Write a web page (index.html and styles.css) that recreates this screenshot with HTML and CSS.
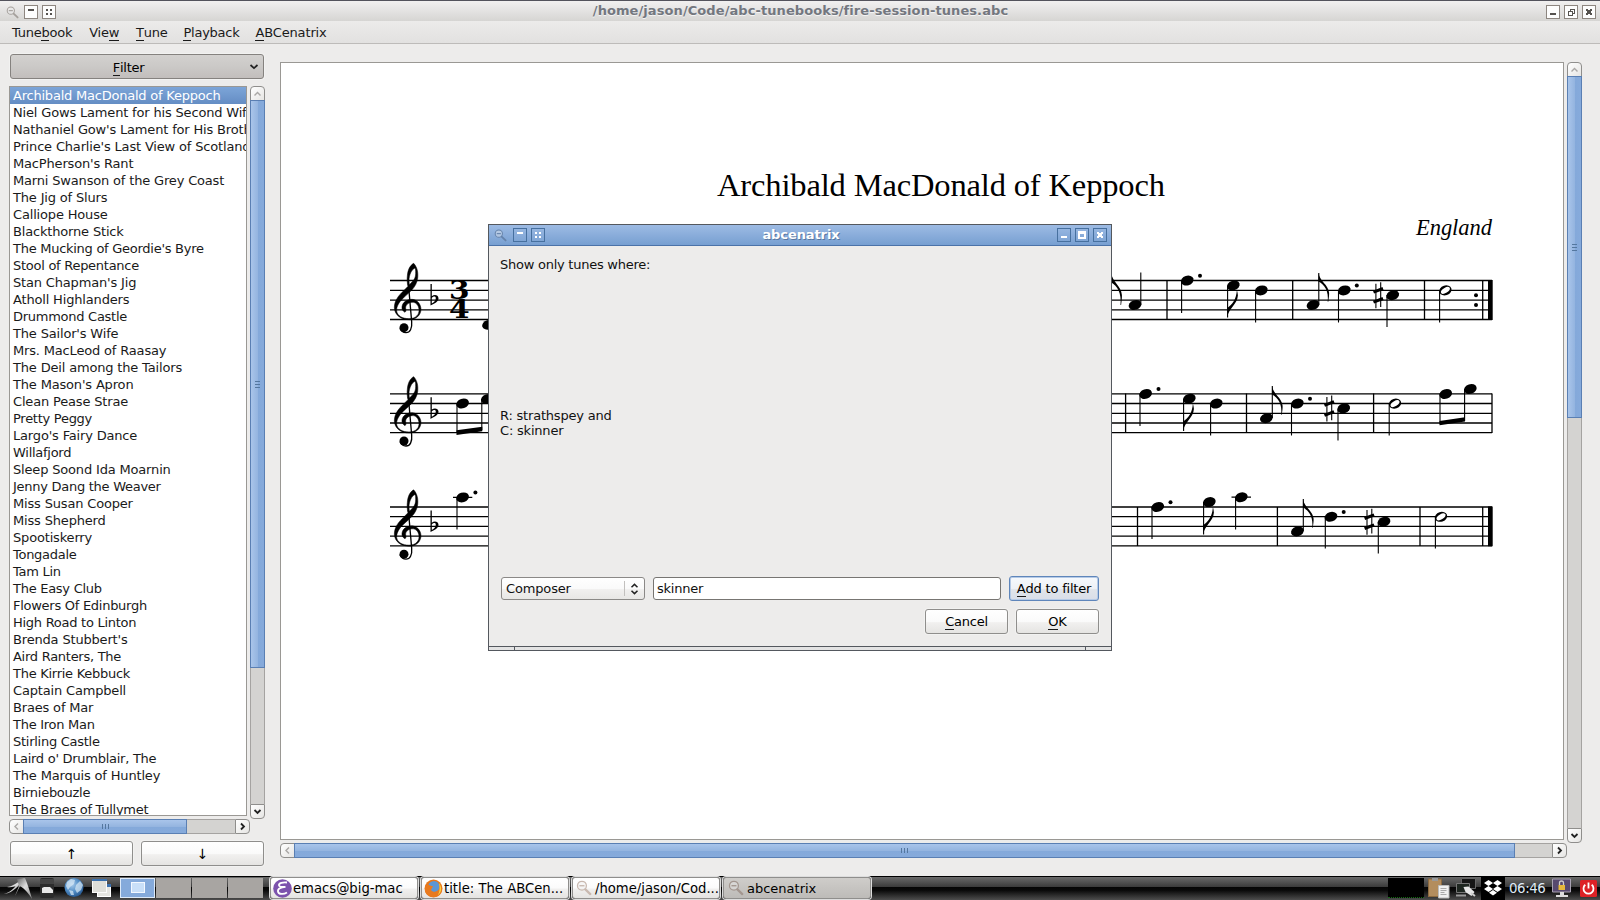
FILE: index.html
```html
<!DOCTYPE html>
<html lang="en">
<head>
<meta charset="utf-8">
<title>ABCenatrix</title>
<link rel="stylesheet" href="styles.css">
</head>
<body>
<svg class="defs" width="0" height="0">
  <defs>
    <linearGradient id="silver" x1="0" y1="0" x2="1" y2="1"><stop offset="0" stop-color="#555"/><stop offset=".5" stop-color="#ddd"/><stop offset="1" stop-color="#888"/></linearGradient>
    <radialGradient id="globe" cx=".4" cy=".35" r=".65"><stop offset="0" stop-color="#a5c9ea"/><stop offset=".6" stop-color="#4f8bc4"/><stop offset="1" stop-color="#2a5c94"/></radialGradient>
    <symbol id="lens" viewBox="0 0 14 14"><circle cx="5.2" cy="5" r="3.9" fill="#eee" fill-opacity=".4" stroke="currentColor" stroke-width="1.1"/><path d="M3 5h4.4" stroke="currentColor" stroke-width="1.2"/><path d="M8.2 8.2l4.3 4.1" stroke="currentColor" stroke-width="2" stroke-linecap="round"/></symbol>
    <g id="clef" transform="translate(370 240) scale(.33333)">
      <path fill-rule="evenodd" stroke="#000" stroke-width="1.5" d="M131 70C142 82 145 98 143 115C139 143 118 157 101 173C87 186 79 200 80 213C82 228 98 236 117 236C138 236 148 223 147 209C146 194 136 186 126 187C113 188 106 197 107 205C107 210 110 212 105 217C98 213 95 207 96 200C98 187 110 178 126 178C142 179 152 192 153 207C153 226 138 239 118 239C92 239 74 225 73 203C73 182 86 166 101 152L114 139C111 128 111 116 112 108C113 90 120 76 131 70ZM135 84C125 88 117 105 117 122L118 134C130 124 137 115 137 100C137 92 137 87 135 84Z"/>
      <path d="M115 130L125 245C127 266 120 278 108 278C100 278 93 273 90 265" fill="none" stroke="#000" stroke-width="4"/>
      <circle cx="102" cy="263" r="13.5"/>
    </g>
    <path id="flat" d="M430.5 284h1.3v12.2C434 294.4 438.3 294.6 438.5 298.3C438.6 301.6 434.5 303.8 430.5 305.6ZM431.8 298v5.4C434 302.3 436 300.5 435.8 298C435.5 295.8 433 296.5 431.8 298Z"/>
    <ellipse id="n" rx="6.5" ry="4.8" transform="rotate(-18)"/>
    <g id="h"><ellipse rx="6.3" ry="4.9" transform="rotate(-18)"/><ellipse rx="5" ry="2.5" transform="rotate(-32)" fill="#fff"/></g>
    <g id="sh" fill="none" stroke="#000"><path d="M-2.4-11.6V13M2.4-13V11.8" stroke-width="1.1"/><path d="M-4.8-3.2L4.7-6.8M-4.8 6.8L4.7 3.2" stroke-width="3"/></g>
    <path id="fu" d="M0 0C1 9 10 13 10.6 22C10.7 25 10.4 27 9.8 32H9.2C10.5 20 6 13 0 9.5Z"/>
    <path id="fd" d="M0 0C1-9 10-13 10.6-22C10.5-24 10-26 9.6-27.5C9-18 5-13 0-9.5Z"/>
  </defs>
</svg>

<header class="titlebar">
  <svg class="t-lens" width="13" height="13"><use href="#lens"/></svg>
  <span class="wb"><svg viewBox="0 0 12 12"><path d="M3 3h6v2H3z"/></svg></span>
  <span class="wb"><svg viewBox="0 0 12 12"><path d="M3 3h2v2H3zM7 3h2v2H7zM3 7h2v2H3zM7 7h2v2H7z"/></svg></span>
  <span class="t-text main-title">/home/jason/Code/abc-tunebooks/fire-session-tunes.abc</span>
  <span class="wb"><svg viewBox="0 0 12 12"><path d="M3 7h6v2H3z"/></svg></span>
  <span class="wb"><svg viewBox="0 0 12 12"><path fill-rule="evenodd" d="M5 3h5v5H8v2H3V5h2zM6 4v1h2v2h1V4zM4 6v3h3V6z"/></svg></span>
  <span class="wb"><svg viewBox="0 0 12 12"><path d="M3 3h2v1h2V3h2v2H8v2h1v2H7V8H5v1H3V7h1V5H3z"/></svg></span>
</header>
<nav class="menubar">
  <span>Tune<u>b</u>ook</span><span>Vie<u>w</u></span><span><u>T</u>une</span><span><u>P</u>layback</span><span><u>A</u>BCenatrix</span>
</nav>

<main class="content">
  <aside class="side">
    <button class="btn filter"><span><u>F</u>ilter</span><svg width="10" height="6"><path d="M1.5 1L5 4.2L8.5 1" fill="none" stroke="#222" stroke-width="1.7"/></svg></button>
    <div class="listwrap">
      <ul class="list">
        <li class="sel">Archibald MacDonald of Keppoch</li><li>Niel Gows Lament for his Second Wife</li><li>Nathaniel Gow's Lament for His Brother</li><li>Prince Charlie's Last View of Scotland</li><li>MacPherson's Rant</li><li>Marni Swanson of the Grey Coast</li><li>The Jig of Slurs</li><li>Calliope House</li><li>Blackthorne Stick</li><li class="tight">The Mucking of Geordie's Byre</li><li class="tight">Stool of Repentance</li><li>Stan Chapman's Jig</li><li>Atholl Highlanders</li><li class="tight">Drummond Castle</li><li>The Sailor's Wife</li><li>Mrs. MacLeod of Raasay</li><li>The Deil among the Tailors</li><li>The Mason's Apron</li><li>Clean Pease Strae</li><li class="tight">Pretty Peggy</li><li>Largo's Fairy Dance</li><li class="tight">Willafjord</li><li>Sleep Soond Ida Moarnin</li><li class="tight">Jenny Dang the Weaver</li><li>Miss Susan Cooper</li><li>Miss Shepherd</li><li>Spootiskerry</li><li class="tight">Tongadale</li><li class="tight">Tam Lin</li><li class="tight">The Easy Club</li><li class="tight">Flowers Of Edinburgh</li><li class="tight">High Road to Linton</li><li>Brenda Stubbert's</li><li class="tight">Aird Ranters, The</li><li class="tight">The Kirrie Kebbuck</li><li>Captain Campbell</li><li>Braes of Mar</li><li class="tight">The Iron Man</li><li class="tight">Stirling Castle</li><li class="tight">Laird o' Drumblair, The</li><li>The Marquis of Huntley</li><li class="tight">Birniebouzle</li><li class="tight">The Braes of Tullymet</li>
      </ul>
      <div class="sb v">
        <i class="cap start off"><svg viewBox="0 0 13 13"><path d="M3.5 8.5l3-3l3 3"/></svg></i><i class="thumb list-v"><b></b></i><i class="track"></i><i class="cap end"><svg viewBox="0 0 13 13"><path d="M3.5 5l3 3l3-3"/></svg></i>
      </div>
      <div class="sb h">
        <i class="cap start off"><svg viewBox="0 0 13 13"><path d="M8 3.5l-3 3l3 3"/></svg></i><i class="thumb list-h"><b></b></i><i class="track"></i><i class="cap end"><svg viewBox="0 0 13 13"><path d="M5 3.5l3 3l-3 3"/></svg></i>
      </div>
    </div>
    <div class="movers"><button class="btn">↑</button><button class="btn">↓</button></div>
  </aside>

  <section class="view">
    <div class="paper">
      <svg class="score" width="1282" height="776" viewBox="281 63 1282 776">
        <text class="tune" x="717" y="196" textLength="448">Archibald MacDonald of Keppoch</text>
        <text class="origin" x="1416" y="234.500" textLength="76">England</text>
        <path class="staff" d="M390 280.5H1492M390 290.3H1492M390 300.1H1492M390 309.8H1492M390 319.5H1492M390 393.8H1492M390 403.5H1492M390 413.3H1492M390 423H1492M390 432.6H1492M390 507H1492M390 516.6H1492M390 526.4H1492M390 536.2H1492M390 545.8H1492"/>
        <use href="#clef"/><use href="#clef" y="113.3"/><use href="#clef" y="226.5"/>
        <use href="#flat"/><use href="#flat" y="113.3"/><use href="#flat" y="226.5"/>
        <g transform="translate(459.2 0) scale(1.12 1)"><text class="meter" y="299" text-anchor="middle">3</text><text class="meter" y="318.300" text-anchor="middle">4</text></g>
        <path class="bar" d="M1167 280V320M1292.7 280V320M1424.5 280V320M1482.7 280V320M1125.6 393.5V433M1246.5 393.5V433M1373.6 393.5V433M1492 393.5V433M1137.5 507V546M1277.4 507V546M1420 507V546M1482.7 507V546"/>
        <path d="M1488 280h4.7v40h-4.7zM1488 506.5h4.7v39.8h-4.7z"/>
        <path class="stem" d="M1140.8 305V272.5M1181.6 280.5V313M1227.6 286V317.5M1255.6 291V322.5M1318.8 305V273M1338.5 291V322.5M1387 295V327M1439.6 291V322.5M1140 394V426M1183.6 399V431M1210.6 404V435.6M1272.3 418V386M1291.5 404V435.6M1338 409V440.5M1389.2 404V435.6M1440 394V424M1464.6 389V421M1152 507V539M1203.6 502V534.5M1235.6 497V529.5M1303.3 531V499M1325.3 517V548.6M1378.3 522V553.6M1435.4 517V548.6M457 403.5V433M481.8 399V430M457 497V529.5"/>
        <path class="bar" d="M1231.5 497.2H1251M453 497.4H472.3"/>
        <path d="M1439.5 421L1465 417.3V421.6L1439.5 425.3zM456.5 430.3L482.3 426.7V431.3L456.5 435z"/>
        <use href="#n" x="1135" y="305"/><use href="#n" x="1187.2" y="280.6"/><use href="#n" x="1233.3" y="285.5"/><use href="#n" x="1261.3" y="290.4"/><use href="#n" x="1313" y="305"/><use href="#n" x="1344.3" y="290.4"/><use href="#n" x="1392.7" y="295.2"/><use href="#h" x="1445.4" y="290.4"/>
        <use href="#n" x="1145.6" y="394"/><use href="#n" x="1189.3" y="398.7"/><use href="#n" x="1216.2" y="403.6"/><use href="#n" x="1266.4" y="418.2"/><use href="#n" x="1297.3" y="403.6"/><use href="#n" x="1343.7" y="408.4"/><use href="#h" x="1395" y="403.6"/><use href="#n" x="1445.7" y="394"/><use href="#n" x="1470.3" y="389"/>
        <use href="#n" x="1157.7" y="507"/><use href="#n" x="1209.3" y="502.1"/><use href="#n" x="1241.3" y="497.3"/><use href="#n" x="1297.4" y="531.4"/><use href="#n" x="1331" y="516.8"/><use href="#n" x="1384" y="521.7"/><use href="#h" x="1441" y="516.8"/>
        <use href="#n" x="488.5" y="324.7"/><use href="#n" x="462.6" y="403.5"/><use href="#n" x="487.3" y="399"/><use href="#n" x="462.6" y="497.4"/>
        <use href="#fu" x="1111.3" y="273"/><use href="#fu" x="1318.5" y="273" transform="translate(0 27.3) scale(1 .9)"/><use href="#fu" x="1272" y="386" transform="translate(0 38.6) scale(1 .9)"/><use href="#fu" x="1303" y="499" transform="translate(0 49.9) scale(1 .9)"/>
        <use href="#fd" x="1227.3" y="317.5"/><use href="#fd" x="1183.3" y="431"/><use href="#fd" x="1203.3" y="534.5"/>
        <use href="#sh" x="1378.3" y="295.3"/><use href="#sh" x="1329.3" y="408.5"/><use href="#sh" x="1369.4" y="521.7"/>
        <g><circle cx="1200" cy="275.8" r="2"/><circle cx="1356.8" cy="285.5" r="2"/><circle cx="1476" cy="295.2" r="2"/><circle cx="1476" cy="305" r="2"/><circle cx="1158.5" cy="389" r="2"/><circle cx="1310" cy="398.7" r="2"/><circle cx="1170.5" cy="502.2" r="2"/><circle cx="1343.7" cy="512" r="2"/><circle cx="475.4" cy="492.6" r="2"/></g>
      </svg>
    </div>
    <div class="sb v">
      <i class="cap start off"><svg viewBox="0 0 13 13"><path d="M3.5 8.5l3-3l3 3"/></svg></i><i class="thumb view-v"><b></b></i><i class="track"></i><i class="cap end"><svg viewBox="0 0 13 13"><path d="M3.5 5l3 3l3-3"/></svg></i>
    </div>
    <div class="sb h">
      <i class="cap start off"><svg viewBox="0 0 13 13"><path d="M8 3.5l-3 3l3 3"/></svg></i><i class="thumb view-h"><b></b></i><i class="track"></i><i class="cap end"><svg viewBox="0 0 13 13"><path d="M5 3.5l3 3l-3 3"/></svg></i>
    </div>
  </section>
</main>

<section class="dialog">
  <header class="titlebar blue">
    <svg class="t-lens" width="13" height="13"><use href="#lens"/></svg>
    <span class="wb"><svg viewBox="0 0 12 12"><path d="M3 3h6v2H3z"/></svg></span>
    <span class="wb"><svg viewBox="0 0 12 12"><path d="M3 3h2v2H3zM7 3h2v2H7zM3 7h2v2H3zM7 7h2v2H7z"/></svg></span>
    <span class="t-text">abcenatrix</span>
    <span class="wb"><svg viewBox="0 0 12 12"><path d="M3 7h6v2H3z"/></svg></span>
    <span class="wb"><svg viewBox="0 0 12 12"><path fill-rule="evenodd" d="M2 2h8v8H2zM4 5v3h4V5z"/></svg></span>
    <span class="wb"><svg viewBox="0 0 12 12"><path d="M3 3h2v1h2V3h2v2H8v2h1v2H7V8H5v1H3V7h1V5H3z"/></svg></span>
  </header>
  <div class="dbody">
    <p class="lead">Show only tunes where:</p>
    <p class="rules">R: strathspey and<br>C: skinner</p>
    <div class="row">
      <div class="combo"><span>Composer</span><i></i><svg width="9" height="12"><path d="M1.5 4.2L4.5 1.4L7.5 4.2M1.5 7.8L4.5 10.6L7.5 7.8" fill="none" stroke="#222" stroke-width="1.5"/></svg></div>
      <div class="entry">skinner</div>
      <button class="btn add"><span><u>A</u>dd to filter</span></button>
    </div>
    <div class="row acts"><button class="btn"><span><u>C</u>ancel</span></button><button class="btn"><span><u>O</u>K</span></button></div>
  </div>
  <footer class="grip"><i></i><i></i><i></i></footer>
</section>

<footer class="taskbar">
  <svg class="launch" width="116" height="24" viewBox="0 0 116 24">
    <path d="M4 18C12 16 16 9 24 2C20 8 14 17 4 18zM7 11C13 10 17 7 24 2C19 9 15 12 7 11z" fill="url(#silver)"/><path d="M17 3L25 2C28 9 30 16 32 23C29 18 25 13 20 10L15 20L19 10z" fill="url(#silver)"/>
    <rect x="40" y="2" width="14" height="20" rx="2" fill="#2c2c2c"/><path d="M40 3h14v5H40z" fill="#444"/><path d="M42 17v-5l2-1h6l3 3v3z" fill="#e9e9e9"/>
    <circle cx="74" cy="11.500" r="9.500" fill="url(#globe)"/><path d="M67 6l4-3l4 1l-1 4l-4 3l-2 3l-2-4zM76 9l4-4l3 4l-2 5l-4 3l-2-4zM69 14l4 1l1 4l-3 0z" fill="#dcebf7" opacity=".7"/>
    <rect x="97.500" y="8.500" width="13" height="12" fill="#e4e4e0" stroke="#fff"/><path d="M97 8h14v3H97z" fill="#3a70ae"/><rect x="92.500" y="4.500" width="14" height="12" fill="#deded9" stroke="#fafafa"/><path d="M92 3h15v2H92z" fill="#3a70ae"/>
  </svg>
  <div class="pager"><i class="on"><b></b></i><i></i><i></i><i></i></div>
  <div class="tasks">
    <div class="task"><svg width="19" height="19" viewBox="0 0 19 19"><circle cx="9.500" cy="9.500" r="9.300" fill="#7c52ad"/><path d="M14 3.500C10 3 5.500 4 6 6.300C6.300 8 10 8 12.500 7.800C8 8.300 4.500 9.800 5 12.500C5.500 15.600 11 15.500 14 13.500" fill="none" stroke="#fff" stroke-width="1.800"/></svg><span>emacs@big-mac</span></div>
    <div class="task"><svg width="19" height="19" viewBox="0 0 19 19"><circle cx="9.500" cy="9.500" r="9" fill="#e8771a"/><circle cx="10" cy="8" r="6" fill="#5c96d4"/><path d="M1 7C4 4 6 7 9 7L7 11C9 14 13 13 15 10C16 8 15 5 14 3C18 6 19 12 16 15.500C11 20 3 18.500 1 12z" fill="#e87a1f"/><path d="M15 4c3 4 3 9-1 12c2-4 2-8 1-12z" fill="#fbd23c"/></svg><span>title: The ABCen...</span></div>
    <div class="task"><svg class="tl" width="16" height="16"><use href="#lens"/></svg><span>/home/jason/Cod...</span></div>
    <div class="task active"><svg class="tl" width="16" height="16"><use href="#lens"/></svg><span>abcenatrix</span></div>
  </div>
  <div class="tray">
    <div class="cpu"></div>
    <svg width="22" height="22" viewBox="0 0 22 22"><rect x=".5" y="2" width="13" height="17.500" fill="#b38d5e" stroke="#8c6a40"/><path d="M4 1h6v3H4z" fill="#999"/><path d="M10.500 8.500h10.500v12.500h-10.500z" fill="#f0f0f0" stroke="#bbb"/><path d="M12.500 11.500h6M12.500 13.500h6M12.500 15.500h4M12.500 17.500h6" stroke="#aaa"/></svg>
    <svg width="22" height="22" viewBox="0 0 22 22"><path d="M6.500 1.500h14v10h-14z" fill="#151515" stroke="#666"/><path d="M1.500 6.500h13v9h-13z" fill="#1e2620" stroke="#777"/><path d="M1 17.500h10v2H1z" fill="#999"/><path d="M8.500 10l5-.5l6 5.500l-3 4l-6-4z" fill="#e8e8e8"/><path d="M16 16l4 3" stroke="#ccc" stroke-width="2"/></svg>
    <svg class="dbx" width="24" height="24" viewBox="0 0 24 24"><path d="M7.500 4L12 7L7.500 10L3 7zM16.500 4L21 7L16.500 10L12 7zM7.500 10L12 13L7.500 16L3 13zM16.500 10L21 13L16.500 16L12 13zM12 14L16 16.800L12 19.500L8 16.800z" fill="#fff"/></svg>
    <span class="clock">06:46</span>
    <svg width="22" height="22" viewBox="0 0 22 22"><path d="M1.500 2h18v13h-18z" fill="#57496f" stroke="#a9a3b3"/><path d="M9 15h4v3h4v2H5v-2h4z" fill="#ddd"/><path d="M8.500 8V6a2 2 0 0 1 4 0v2" fill="none" stroke="#ccc" stroke-width="1.300"/><path d="M7.500 8h6.500v5H7.500z" fill="#e6b83c"/></svg>
    <svg class="pow" width="17" height="17" viewBox="0 0 17 17"><rect width="17" height="17" rx="1.500" fill="#dd2226"/><path d="M5.300 4.800a5 5 0 1 0 6.400 0M8.500 2.500v6" fill="none" stroke="#fff" stroke-width="1.800"/></svg>
  </div>
</footer>
</body>
</html>
```
FILE: styles.css
```css
* { box-sizing: border-box; }
body { margin: 0; width: 1600px; height: 900px; overflow: hidden; background: #edeceb; color: #1a1a1a; font: 13px "DejaVu Sans", sans-serif; letter-spacing: -.25px; display: flex; flex-direction: column; position: relative; }
.defs { position: absolute; }
u { text-decoration: none; box-shadow: 0 1px 0 #1a1a1a; display: inline-block; line-height: 14px; }

.titlebar { height: 21px; flex: none; display: flex; align-items: center; padding: 2px 4px 0 6px; border-top: 1px solid #53535c; background: linear-gradient(#f1f0f0, #d6d5d3); gap: 4px; color: #8d8680; }
.t-lens { margin-right: 1px; color: #a5a09c; }
.wb { width: 14px; height: 14px; border: 1px solid #8d8680; background: #fdfdfd; display: block; }
.wb svg { display: block; width: 12px; height: 12px; fill: #55524f; }
.t-text { flex: 1; text-align: center; font-weight: bold; line-height: 16px; letter-spacing: -.1px; color: #73777f; }
.main-title { letter-spacing: .08px; padding: 0 1px 2px 0; text-shadow: 0 1px #f4f4f4; }

.menubar { height: 23px; flex: none; display: flex; gap: 17px; padding: 3px 12px 0; line-height: 17px; background: linear-gradient(#ecebea, #e2e1e0); border-bottom: 1px solid #bdbbb9; }
.menubar span:nth-child(n+4) { margin-left: -1px; }
.menubar span:last-child { letter-spacing: -.15px; }

.content { flex: 1; display: flex; gap: 15px; padding: 10px 18px 0 9px; }
.side { width: 256px; }
.btn { font: inherit; letter-spacing: inherit; color: #000; height: 25px; padding: 0; border: 1px solid #8f8e8c; border-radius: 3px; background: linear-gradient(#fff, #fafafa 50%, #f1f0ef 55%, #e5e4e2); display: flex; align-items: center; justify-content: center; box-shadow: 0 0 0 1px rgba(255,255,255,.3); }
.filter { width: 254px; margin: 0 1px; background: linear-gradient(#d3d1cf, #cbc9c7 50%, #c2bebc); padding: 1px 4px 0 0; border-color: #85827f; }
.filter span { flex: 1; text-align: center; margin-right: 3px; }
.listwrap, .view { display: grid; grid-template-columns: 1fr 15px; column-gap: 3px; row-gap: 3px; }
.listwrap { margin-top: 7px; height: 748px; grid-template-rows: 730px 15px; }
.list { margin: 0; padding: 0; border: 1px solid #9a9894; background: #fff; overflow: hidden; list-style: none; width: 238px; letter-spacing: -.17px; }
.list li { height: 17px; line-height: 17px; padding-left: 3px; white-space: nowrap; }
.list .tight { letter-spacing: -.27px; }
.list .sel { background: linear-gradient(#7da5d8, #648dc4); color: #fff; letter-spacing: -.22px; }
.sb { display: flex; background: #edeceb; font-style: normal; }
.sb.v { flex-direction: column; width: 15px; height: calc(100% + 3px); }
.sb.h { height: 15px; width: calc(100% + 3px); }
.sb i { display: block; flex: none; }
.cap { width: 15px; height: 15px; border: 1px solid #8f8e8c; background: linear-gradient(135deg, #fff, #e6e5e3); }
.cap svg { display: block; width: 13px; height: 13px; fill: none; stroke: #222; stroke-width: 1.8; }
.cap.off svg { stroke: #a9a7a5; stroke-width: 1.4; }
.sb.v .start { border-radius: 4px 4px 0 0; }
.sb.v .end { border-radius: 0 0 4px 4px; }
.sb.h .start { border-radius: 4px 0 0 4px; }
.sb.h .end { border-radius: 0 4px 4px 0; }
.sb .thumb { border: 1px solid #5a7fb3; display: flex; align-items: center; justify-content: center; background: linear-gradient(#a9c5ea, #95b5e0 50%, #84a9da 55%, #86aadb); }
.sb.v .thumb { background: linear-gradient(90deg, #a9c5ea, #95b5e0 50%, #84a9da 55%, #86aadb); margin-top: -1px; }
.sb.h .thumb { margin-left: -1px; }
.thumb b { width: 7px; height: 5px; background: repeating-linear-gradient(90deg, #54779f 0 1px, transparent 1px 3px); }
.sb.v .thumb b { width: 5px; height: 7px; background: repeating-linear-gradient(#54779f 0 1px, transparent 1px 3px); }
.sb .track { flex: 1; background: #d4d3d1; border: 1px solid #a5a3a1; }
.sb.v .track { border-width: 0 1px; }
.sb.h .track { border-width: 1px 0; }
.list-v { height: 568px; }
.list-h { width: 164px; }
.view-v { height: 342px; }
.view-h { width: 1221px; }
.movers { display: flex; gap: 8px; margin: 7px 1px 0; font-size: 14px; }
.movers .btn { flex: 1; }

.view { flex: 1; margin-top: 8px; height: 796px; grid-template-rows: 778px 15px; }
.paper { background: #fff; border: 1px solid #9a9894; width: 1284px; }
.score { display: block; letter-spacing: 0; }
.tune { font: 32.5px "Liberation Serif", serif; }
.origin { font: italic 22.5px "Liberation Serif", serif; }
.meter { font: bold 26.5px "DejaVu Serif", serif; }
.staff { stroke: #000; stroke-width: 1.3; }
.bar { stroke: #000; stroke-width: 1.3; }
.stem { stroke: #000; stroke-width: 1.1; }

.dialog { position: absolute; left: 488px; top: 224px; width: 624px; height: 427px; border: 1px solid #54585e; background: #edeceb; display: flex; flex-direction: column; }
.blue { border-top: 0; border-bottom: 1px solid #4b72a8; padding: 0 4px 0 6px; background: linear-gradient(#9dbbe4, #779fd1); }
.blue .wb { background: transparent; border-color: #47709f; }
.blue .wb svg { fill: #fff; }
.blue .t-text { color: #fff; text-shadow: 1px 1px #5878a3; }
.blue .t-lens { color: #6583ab; margin-left: -1px; margin-right: 2px; }
.dbody { flex: 1; padding: 11px 12px 0; color: #111; }
.dbody p { margin: 0 0 0 -1px; line-height: 15px; }
.lead { height: 151px; }
.rules { height: 168px; letter-spacing: -.2px; }
.row { display: flex; gap: 8px; height: 25px; align-items: center; }
.combo, .entry { height: 23px; border: 1px solid #8b8987; border-radius: 3px; display: flex; align-items: center; background: linear-gradient(#fff, #fafafa 50%, #f1f0ef 55%, #e8e7e5); }
.combo { width: 144px; padding: 0 5px 0 4px; letter-spacing: -.15px; }
.combo span { flex: 1; }
.combo i { width: 1px; height: 15px; background: #c2c0be; margin-right: 5px; }
.entry { width: 348px; background: #fff; padding-left: 3px; border-color: #777572; }
.add { width: 90px; border-color: #5f86bb; background: linear-gradient(#f6f9fd, #eef1f6 50%, #e0e4ea 55%, #d9dee8); box-shadow: inset 0 0 0 1px #b5cae6; letter-spacing: -.2px; }
.acts { margin-top: 8px; justify-content: flex-end; }
.acts .btn { width: 83px; }
.grip { height: 4px; display: flex; border-top: 1px solid #54585e; background: #e3e3e3; }
.grip i { flex: 1; }
.grip i:first-child { flex: 0 0 26px; border-right: 1px solid #54585e; }
.grip i:last-child { flex: 0 0 26px; border-left: 1px solid #54585e; }

.taskbar { height: 24px; flex: none; display: flex; background: linear-gradient(#000 0 1px, #6a6a6a 1px, #3c3c3c 45%, #050505 46%, #0a0a0a 60%, #4d4d4d); color: #000; letter-spacing: 0; }
.launch { flex: none; }
.pager { display: flex; gap: 1px; margin-left: 4px; padding-top: 2px; height: 23px; }
.pager i { width: 35px; height: 20px; background: #a8a5a2; }
.pager .on { background: #85aadb; border: 1px solid #dce9f8; padding: 3px 10px; }
.pager b { display: block; width: 14px; height: 11px; background: #c9dff8; border: 1px solid #f3f8ff; }
.tasks { display: flex; gap: 3px; margin-left: 7px; padding-top: 1px; }
.task { width: 148px; height: 22px; border: 1px solid #8f8e8c; border-radius: 3px; background: linear-gradient(#fff, #fbfbfb 50%, #f1f0ef 55%, #e4e3e1); display: flex; align-items: center; gap: 1px; padding-left: 2px; white-space: nowrap; font-size: 13.2px; box-shadow: 0 0 0 1px #ddd; }
.task svg { flex: none; }
.task .tl { color: #c9b9b0; margin: 0 2px 0 1px; }
.active { background: linear-gradient(#cfcdca, #bdbbb8); }
.task.active .tl { color: #a3968f; margin-left: 2px; }
.active span { padding-top: 1px; font-size: 13px; }
.tray { margin-left: auto; display: flex; align-items: center; padding-right: 3px; }
.cpu { width: 36px; height: 20px; background: #000; border-bottom: 1px dotted #126a12; margin-right: 4px; }
.tray svg + svg { margin-left: 5px; }
.tray svg + .dbx { margin-left: 4px; background: #000; }
.clock { color: #dfeaf5; font-size: 13.33px; margin: 0 7px 0 4px; width: 35px; white-space: nowrap; letter-spacing: -.4px; }
.tray svg + .pow { margin-left: 7px; }
```
